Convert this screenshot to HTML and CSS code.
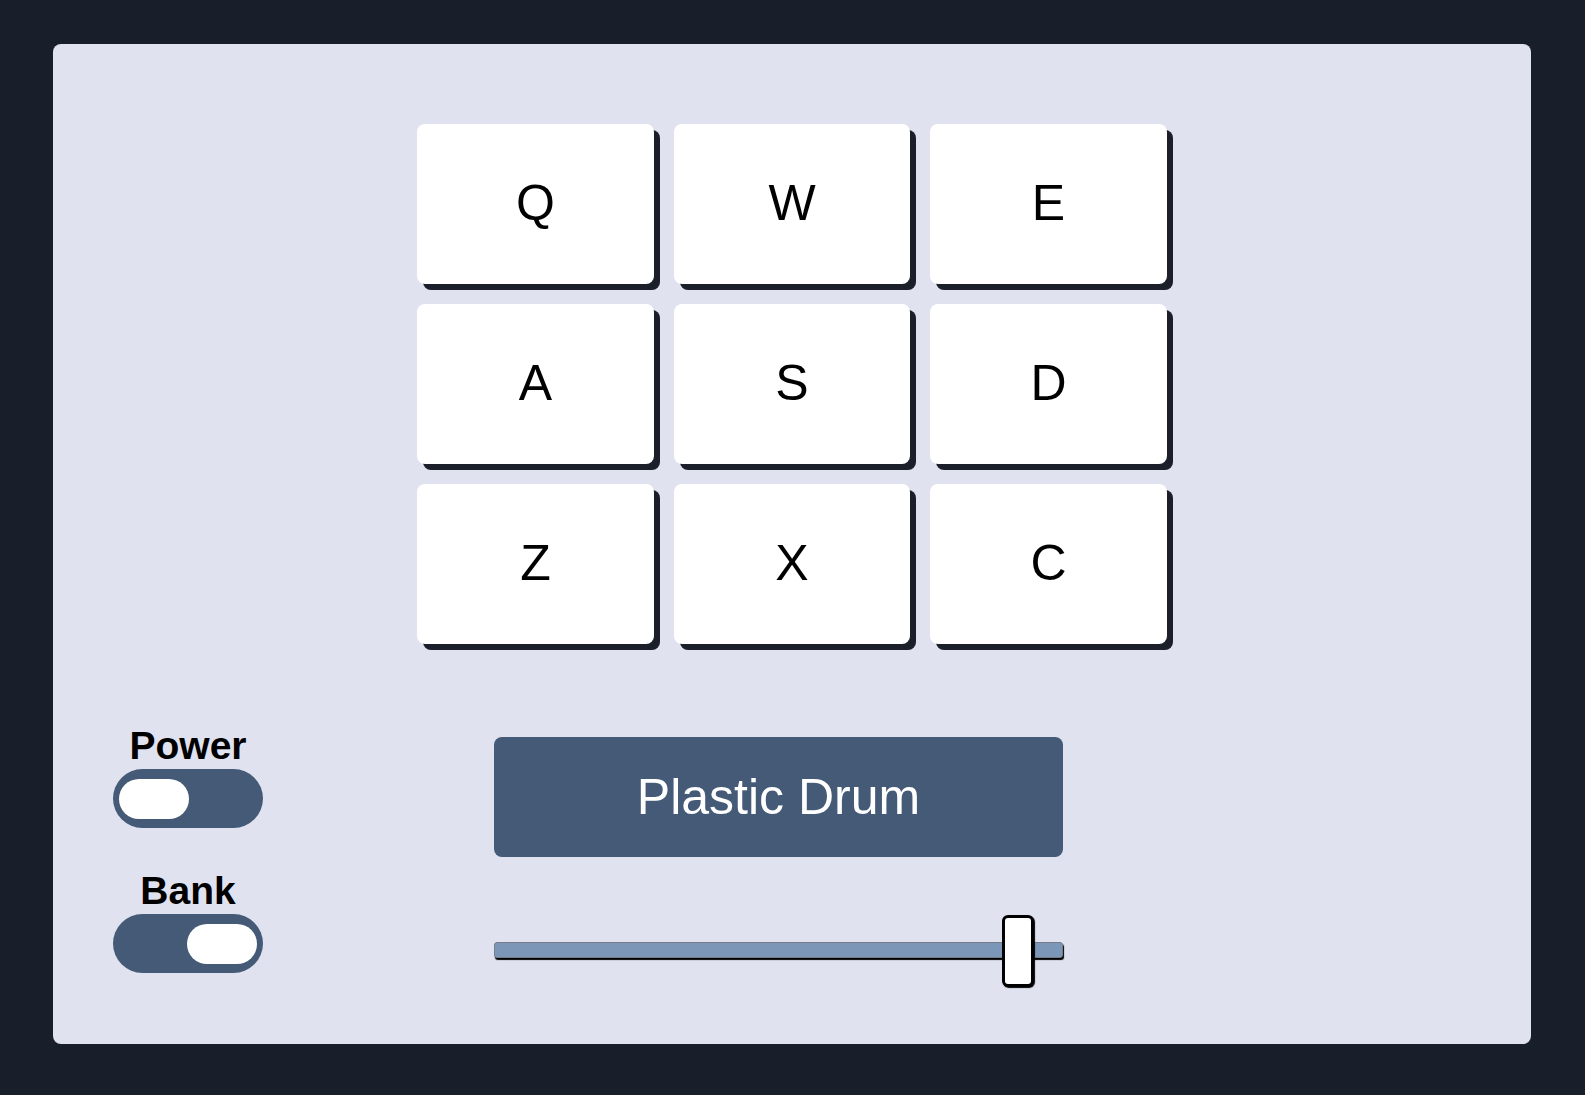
FILE: index.html
```html
<!DOCTYPE html>
<html lang="en">
<head>
<meta charset="utf-8">
<title>Drum Machine</title>
<link rel="stylesheet" href="styles.css">
</head>
<body>
<div class="app">
  <div class="machine" id="drum-machine">
    <div class="pads">
      <div class="pad">Q</div>
      <div class="pad">W</div>
      <div class="pad">E</div>
      <div class="pad">A</div>
      <div class="pad">S</div>
      <div class="pad">D</div>
      <div class="pad">Z</div>
      <div class="pad">X</div>
      <div class="pad">C</div>
    </div>
    <div class="controls">
      <div class="switches">
        <div class="switch-group">
          <p class="switch-label">Power</p>
          <div class="toggle"><span class="knob"></span></div>
        </div>
        <div class="switch-group">
          <p class="switch-label">Bank</p>
          <div class="toggle on"><span class="knob"></span></div>
        </div>
      </div>
      <div class="main-controls">
        <div class="display" id="display">Plastic Drum</div>
        <input type="range" class="volume" min="0" max="1" step="any" value="0.948">
      </div>
    </div>
  </div>
</div>
</body>
</html>
```
FILE: styles.css
```css
html, body {
  margin: 0;
  padding: 0;
}

body {
  background: #181f2a;
  font-family: "Liberation Sans", Arial, sans-serif;
}

.app {
  padding: 44px 54px 51px 53px;
}

.machine {
  width: 1478px;
  height: 1000px;
  box-sizing: border-box;
  background: #e0e3ef;
  border-radius: 8px;
  padding-top: 80px;
}

.pads {
  display: grid;
  grid-template-columns: repeat(3, 236.5px);
  grid-auto-rows: 160px;
  gap: 20px;
  width: 749.5px;
  margin: 0 auto;
}

.pad {
  background: #ffffff;
  border-radius: 8px;
  box-shadow: 6px 6px 0 #1a1f2a;
  display: flex;
  align-items: center;
  justify-content: center;
  font-size: 50px;
  color: #000;
  padding-bottom: 3px;
  box-sizing: border-box;
}

.controls {
  display: flex;
  align-items: flex-start;
  gap: 231px;
  margin: 81px 0 0 60px;
}

.switches {
  width: 150px;
  display: flex;
  flex-direction: column;
  gap: 42px;
  text-align: center;
}

.switch-label {
  margin: 0 0 2px;
  font-size: 39px;
  font-weight: 700;
  line-height: 42px;
  color: #000;
  white-space: nowrap;
}

.toggle {
  width: 150px;
  height: 59px;
  border-radius: 30px;
  background: #445a77;
  display: flex;
  align-items: center;
  padding: 0 6px;
  box-sizing: border-box;
}

.toggle.on {
  justify-content: flex-end;
}

.knob {
  width: 70px;
  height: 40px;
  border-radius: 20px;
  background: #ffffff;
}

.main-controls {
  margin-top: 12px;
  width: 569px;
  display: flex;
  flex-direction: column;
  gap: 57px;
}

.display {
  height: 120px;
  background: #445a77;
  border-radius: 8px;
  color: #ffffff;
  font-size: 50px;
  display: flex;
  align-items: center;
  justify-content: center;
}

.volume {
  -webkit-appearance: none;
  appearance: none;
  width: 569px;
  height: 72px;
  margin: 0;
  padding: 0;
  background: transparent;
  display: block;
}

.volume::-webkit-slider-runnable-track {
  height: 16px;
  background: #7b96b7;
  border: 1px solid #767c88;
  border-radius: 3px;
  box-shadow: 1px 2px 1px #000000;
}

.volume::-webkit-slider-thumb {
  -webkit-appearance: none;
  appearance: none;
  box-sizing: border-box;
  width: 32px;
  height: 72px;
  margin-top: -28px;
  border: 3px solid #000000;
  border-radius: 6px;
  background: #ffffff;
  box-shadow: 1px 1px 1px #000000;
}
```
